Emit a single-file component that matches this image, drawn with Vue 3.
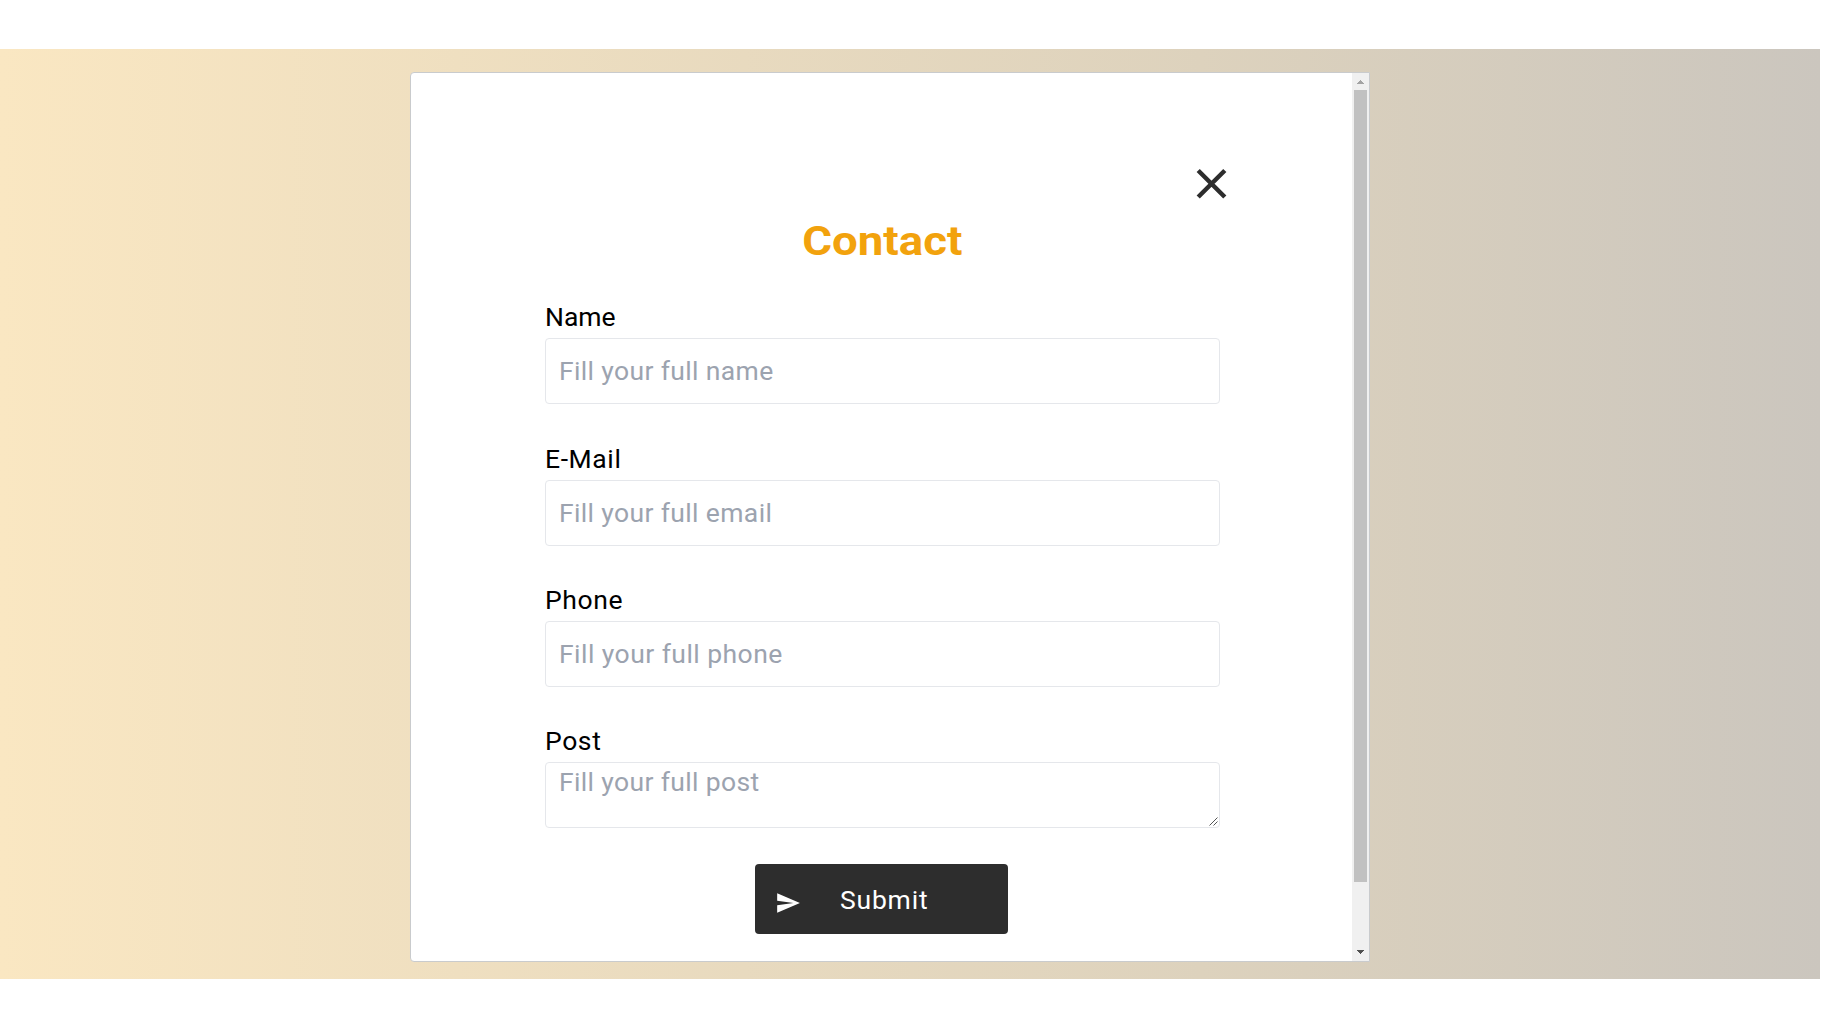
<script setup>
const fields = [
  { id: 'name', label: 'Name', hint: 'Fill your full name' },
  { id: 'email', label: 'E-Mail', hint: 'Fill your full email' },
  { id: 'phone', label: 'Phone', hint: 'Fill your full phone' },
  { id: 'post', label: 'Post', hint: 'Fill your full post', multiline: true },
]
</script>

<template>
  <main class="page">
    <section class="band">
      <div class="modal">
        <form class="form" @submit.prevent>
          <button type="button" class="close" aria-label="Close">
            <svg width="32" height="32" viewBox="0 0 32 32">
              <path d="M2.2 2.5 28.8 29M28.8 2.5 2.2 29" fill="none" stroke="#2d2d2d" stroke-width="4.5" />
            </svg>
          </button>
          <h1 class="title"><span>Contact</span></h1>
          <div v-for="f in fields" :key="f.id" class="field" :class="`field-${f.id}`">
            <label :for="f.id">{{ f.label }}</label>
            <div class="control">
              <textarea v-if="f.multiline" :id="f.id" :placeholder="f.hint"></textarea>
              <input v-else :id="f.id" type="text" :placeholder="f.hint" />
              <svg v-if="f.multiline" class="grip" width="9" height="9" viewBox="0 0 9 9">
                <path d="M.5 8.5l8-8M4.5 8.5l4-4" fill="none" stroke="#555" stroke-width="1" />
              </svg>
            </div>
          </div>
          <button type="submit" class="submit">
            <svg width="26" height="26" viewBox="0 0 24 24">
              <path d="M2.01 21 23 12 2.01 3 2 10l15 2-15 2z" fill="#fff" />
            </svg>
            <span>Submit</span>
          </button>
        </form>
        <div class="scrollbar">
          <svg class="up" width="17" height="17" viewBox="0 0 17 17" shape-rendering="crispEdges">
            <path d="M5 11h7v-1h-1V9h-1V8H9V7H8v1H7v1H6v1H5z" fill="#a3a3a3" />
          </svg>
          <div class="thumb"></div>
          <svg class="down" width="17" height="17" viewBox="0 0 17 17" shape-rendering="crispEdges">
            <path d="M5 6h7v1h-1v1h-1v1H9v1H8V9H7V8H6V7H5z" fill="#505050" />
          </svg>
        </div>
      </div>
    </section>
  </main>
</template>

<style>
body {
  background: #fff;
}
</style>

<style scoped>
* {
  box-sizing: border-box;
}
.page {
  height: 1024px;
  padding-top: 49px;
  overflow: hidden;
  font-family: Roboto, "Liberation Sans", sans-serif;
}
.band {
  width: 1820px;
  height: 930px;
  padding: 23px 0 0 410px;
  background: linear-gradient(to right, #fae7c2, #ddd2bd 66%, #cbc6be);
}
.modal {
  display: flex;
  justify-content: space-between;
  width: 960px;
  height: 890px;
  background: #fff;
  border: 1px solid #c9cbcd;
  border-radius: 4px 0 0 4px;
}
.form {
  display: flex;
  flex-direction: column;
  width: 675px;
  margin-left: 134px;
  padding-top: 95px;
}
.close {
  align-self: flex-end;
  width: 32px;
  height: 32px;
  margin-right: -8px;
  padding: 0;
  border: 0;
  background: none;
}
.close svg {
  display: block;
}
.title {
  height: 48px;
  margin: 18px 0 34.45px;
  padding-right: 1px;
  font-size: 40px;
  line-height: 48px;
  font-weight: 700;
  text-align: center;
  color: #f2a20d;
}
.title span {
  display: inline-block;
  transform: scaleX(1.14);
}
.field {
  height: 141.3px;
  flex: none;
}
label {
  display: block;
  height: 38px;
  font-size: 26.5px;
  line-height: 34px;
  color: #000;
  white-space: nowrap;
  letter-spacing: 0.6px;
}
.field-name label {
  letter-spacing: 0;
}
.control {
  position: relative;
  height: 66px;
}
input,
textarea {
  display: block;
  width: 675px;
  height: 66px;
  margin: 0;
  padding: 0 13px;
  border: 1px solid #e5e7eb;
  border-radius: 4px;
  outline: 0;
  resize: none;
  background: #fff;
  font-family: inherit;
  font-size: 26.5px;
  letter-spacing: 0.36px;
}
input {
  padding-bottom: 1px;
}
.field-phone input {
  letter-spacing: 0.45px;
}
textarea {
  padding-top: 1px;
  line-height: 36px;
  overflow: hidden;
}
input::placeholder,
textarea::placeholder {
  color: #9ca3af;
  opacity: 1;
}
.grip {
  position: absolute;
  right: 2px;
  bottom: 2px;
}
.submit {
  display: flex;
  align-items: center;
  width: 253px;
  height: 70px;
  margin: -1.6px 0 0 210px;
  padding: 0 20px;
  flex: none;
  border: 0;
  border-radius: 4px;
  background: #2d2d2d;
  color: #fff;
  font-family: inherit;
  font-size: 26.5px;
  letter-spacing: 0.8px;
}
.submit svg {
  margin-top: 7px;
}
.submit span {
  margin: 1px 0 0 39px;
}
.scrollbar {
  display: flex;
  flex-direction: column;
  width: 17px;
  background: #f0f0f0;
}
.thumb {
  width: 13px;
  height: 792px;
  margin-left: 2px;
  background: #c1c1c1;
}
.scrollbar svg {
  display: block;
  flex: none;
}
.down {
  margin-top: auto;
}
</style>
